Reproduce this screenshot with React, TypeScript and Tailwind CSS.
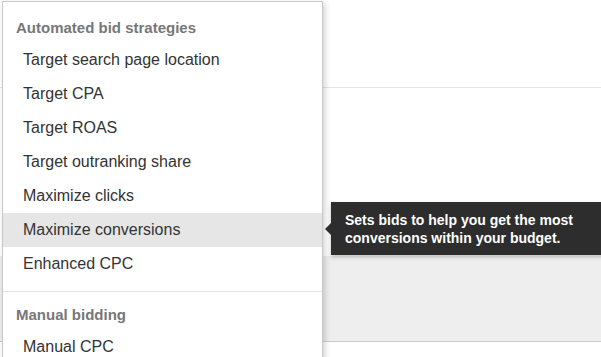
import React from 'react';

const automated = [
  'Target search page location',
  'Target CPA',
  'Target ROAS',
  'Target outranking share',
  'Maximize clicks',
  'Maximize conversions',
  'Enhanced CPC',
];

const manual = ['Manual CPC'];

export default function App() {
  const active = 'Maximize conversions';

  return (
    <div
      className="relative w-[601px] h-[357px] overflow-hidden bg-white"
      style={{ fontFamily: '"Liberation Sans", Arial, sans-serif' }}
    >
      {/* Page behind the menu */}
      <div className="h-[88px] border-b border-[#e5e5e5]"></div>
      <div className="h-[168px]"></div>
      <div className="h-[86px] bg-[#eeeeee] border-b border-[#cccccc]"></div>

      {/* Dropdown menu */}
      <div className="absolute left-[2px] top-[1px] w-[321px] h-[400px] bg-white border border-[#c8c8c8] shadow-[2px_2px_6px_rgba(0,0,0,0.18)]">
        <div className="pt-[9px] pb-[10px]">
          <div className="h-8 flex items-center pt-[3px] pl-[13px] text-[15px] font-bold text-[#777777]">
            Automated bid strategies
          </div>
          {automated.map((item) => (
            <div
              key={item}
              className={`h-[34px] flex items-center pl-5 text-[16px] text-[#333333] ${
                item === active ? 'bg-[#e6e6e6]' : ''
              }`}
            >
              {item}
            </div>
          ))}
        </div>
        <div className="border-t border-[#e5e5e5] pt-[6px]">
          <div className="h-8 flex items-center pt-[2px] pl-[13px] text-[15px] font-bold text-[#777777]">
            Manual bidding
          </div>
          {manual.map((item) => (
            <div key={item} className="h-[34px] flex items-center pl-5 text-[16px] text-[#333333]">
              {item}
            </div>
          ))}
        </div>
      </div>

      {/* Tooltip */}
      <div className="absolute left-[331px] top-[202px] w-[290px] h-[53px] bg-[#2d2d2d] shadow-[0_2px_4px_rgba(0,0,0,0.25)] pl-[14px] pt-[9px]">
        <div className="absolute left-[-6px] top-[21px] w-0 h-0 border-y-[6px] border-y-transparent border-r-[6px] border-r-[#2d2d2d]"></div>
        <p className="text-[14px] leading-[18px] font-bold text-white">
          Sets bids to help you get the most
          <br />
          conversions within your budget.
        </p>
      </div>
    </div>
  );
}
